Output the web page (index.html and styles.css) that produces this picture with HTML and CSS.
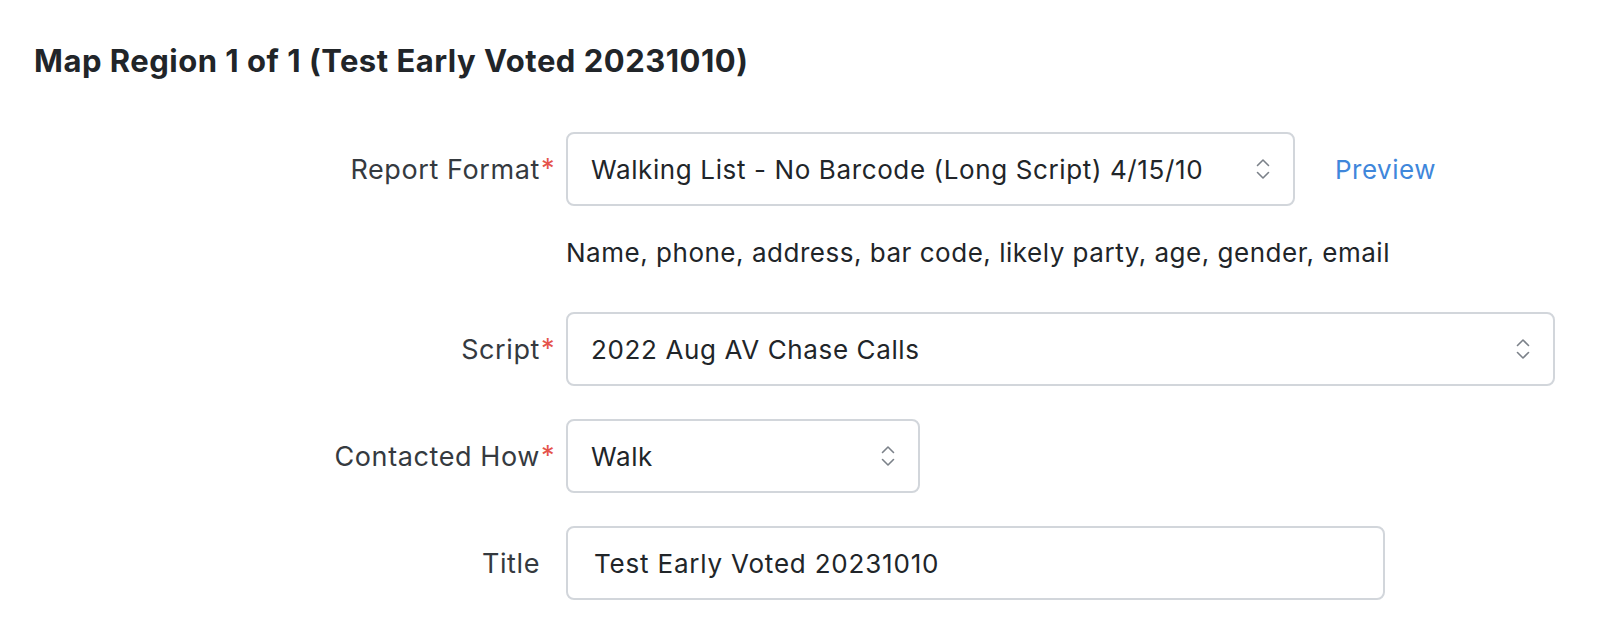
FILE: index.html
```html
<!DOCTYPE html>
<html lang="en">
<head>
<meta charset="utf-8">
<title>Map Region</title>
<link rel="stylesheet" href="styles.css">
</head>
<body>
<main class="page">
  <h1 class="heading">Map Region 1 of 1 (Test Early Voted 20231010)</h1>
  <form class="form">
    <div class="field">
      <label class="label"><span class="req">Report Format</span></label>
      <div class="control">
        <div class="inline">
          <div class="select w-report" role="combobox">
            <span class="value">Walking List - No Barcode (Long Script) 4/15/10</span>
            <svg class="chev" width="14" height="22" viewBox="0 0 14 22" aria-hidden="true"><path d="M1.5 7.5 L7 2 L12.5 7.5 M1.5 14.5 L7 20 L12.5 14.5" fill="none" stroke="#7b8189" stroke-width="1.6" stroke-linecap="round" stroke-linejoin="round"/></svg>
          </div>
          <a class="link" href="#">Preview</a>
        </div>
        <p class="help">Name, phone, address, bar code, likely party, age, gender, email</p>
      </div>
    </div>
    <div class="field">
      <label class="label"><span class="req">Script</span></label>
      <div class="control">
        <div class="select w-script" role="combobox">
          <span class="value">2022 Aug AV Chase Calls</span>
          <svg class="chev" width="14" height="22" viewBox="0 0 14 22" aria-hidden="true"><path d="M1.5 7.5 L7 2 L12.5 7.5 M1.5 14.5 L7 20 L12.5 14.5" fill="none" stroke="#7b8189" stroke-width="1.6" stroke-linecap="round" stroke-linejoin="round"/></svg>
        </div>
      </div>
    </div>
    <div class="field">
      <label class="label"><span class="req">Contacted How</span></label>
      <div class="control">
        <div class="select w-how" role="combobox">
          <span class="value">Walk</span>
          <svg class="chev" width="14" height="22" viewBox="0 0 14 22" aria-hidden="true"><path d="M1.5 7.5 L7 2 L12.5 7.5 M1.5 14.5 L7 20 L12.5 14.5" fill="none" stroke="#7b8189" stroke-width="1.6" stroke-linecap="round" stroke-linejoin="round"/></svg>
        </div>
      </div>
    </div>
    <div class="field">
      <label class="label" for="title">Title</label>
      <div class="control">
        <input id="title" class="input w-title" type="text" value="Test Early Voted 20231010">
      </div>
    </div>
  </form>
</main>
</body>
</html>
```

FILE: styles.css
```css
* { box-sizing: border-box; }

html, body {
  margin: 0;
  padding: 0;
  background: #ffffff;
}

body {
  font-family: Inter, "Noto Sans", "Liberation Sans", sans-serif;
  color: #212529;
}

.page {
  padding: 43px 0 0 34px;
}

.heading {
  margin: 0 0 53px 0;
  font-size: 31px;
  line-height: 36px;
  font-weight: 700;
  color: #212529;
  letter-spacing: 0.5px;
}

.form {
  display: flex;
  flex-direction: column;
  gap: 33px;
}

.field {
  display: grid;
  grid-template-columns: 506px 1fr;
  column-gap: 26px;
  align-items: start;
}

.label {
  height: 74px;
  display: flex;
  align-items: center;
  justify-content: flex-end;
  font-size: 27px;
  letter-spacing: 0.6px;
  color: #353a3f;
}

.req {
  position: relative;
}

.req::after {
  content: "*";
  position: absolute;
  left: 100%;
  top: -1px;
  padding-left: 1px;
  letter-spacing: 0;
  color: #e5534b;
}

.control {
  display: flex;
  flex-direction: column;
}

.inline {
  display: flex;
  align-items: center;
  gap: 40px;
}

.select {
  height: 74px;
  border: 2px solid #d2d6db;
  border-radius: 8px;
  background: #fff;
  display: flex;
  align-items: center;
  justify-content: space-between;
  padding: 0 23px 0 23px;
  font-size: 26px;
  letter-spacing: 0.62px;
  color: #212529;
}

.chev {
  flex: none;
}

.w-report { width: 729px; }
.w-script { width: 989px; }
.w-how { width: 354px; }
.w-title { width: 819px; }

.link {
  font-size: 26px;
  letter-spacing: 0.5px;
  color: #3f87db;
  text-decoration: none;
}

.help {
  margin: 27px 0 7px 0;
  font-size: 26px;
  line-height: 39px;
  letter-spacing: 0.52px;
  color: #212529;
}

.input {
  height: 74px;
  border: 2px solid #d2d6db;
  border-radius: 8px;
  background: #fff;
  padding: 0 24px 0 26px;
  font-family: inherit;
  font-size: 26px;
  letter-spacing: 0.8px;
  color: #212529;
  outline: none;
}
```
